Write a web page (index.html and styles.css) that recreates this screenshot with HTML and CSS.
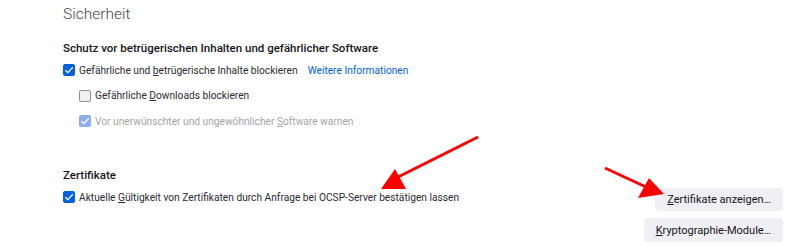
FILE: index.html
```html
<!DOCTYPE html>
<html lang="de">
<head>
    <meta charset="UTF-8">
    <title>Einstellungen - Sicherheit</title>
    <link rel="stylesheet" href="styles.css">
</head>
<body>
    <div class="pane">
        <h1>Sicherheit</h1>

        <!-- Schutz vor betrügerischen Inhalten -->
        <h2>Schutz vor betrügerischen Inhalten und gefährlicher Software</h2>
        <div class="row">
            <span class="check checked"></span>
            <span>Gefährliche und <u>b</u>etrügerische Inhalte blockieren</span>
            <a class="more" href="#">Weitere Informationen</a>
        </div>
        <div class="row sub">
            <span class="check"></span>
            <span>Gefährliche <u>D</u>ownloads blockieren</span>
        </div>
        <div class="row sub disabled">
            <span class="check checked"></span>
            <span>Vor unerwünschter und ungewöhnlicher <u>S</u>oftware warnen</span>
        </div>

        <!-- Zertifikate -->
        <h2 class="certs-title">Zertifikate</h2>
        <div class="certs">
            <div class="row">
                <span class="check checked"></span>
                <span>Aktuelle <u>G</u>ültigkeit von Zertifikaten durch Anfrage bei OCSP-Server bestätigen lassen</span>
            </div>
            <div class="buttons">
                <button><u>Z</u>ertifikate anzeigen…</button>
                <button><u>K</u>ryptographie-Module…</button>
            </div>
        </div>
    </div>

    <!-- rote Pfeile über dem Inhalt -->
    <svg class="arrows" width="800" height="246" viewBox="0 0 800 246">
        <line x1="478" y1="137" x2="396" y2="178" stroke="#f00" stroke-width="3"/>
        <polygon points="395,169 381,189 406,189" fill="#f00"/>
        <line x1="605" y1="168" x2="646" y2="187" stroke="#f00" stroke-width="3"/>
        <polygon points="649,178 638,198 664,194" fill="#f00"/>
    </svg>
</body>
</html>
```

FILE: styles.css
```css
body {
    margin: 0;
    font-family: Roboto, "Liberation Sans", sans-serif;
    font-size: 10.2px;
    color: #2b2a33;
    background-color: #fff;
    position: relative;
}

.pane {
    padding: 3px 17px 0 63px;
}

h1 {
    margin: 0 0 15px 0;
    font-size: 15.5px;
    font-weight: 300;
    line-height: 22px;
    color: #45444c;
}

h2 {
    margin: 0 0 4px 0;
    font-size: 11.5px;
    font-weight: 500;
    line-height: 16px;
    color: #15141a;
}

.certs-title {
    margin-top: 36px;
}

.row {
    display: flex;
    align-items: center;
    height: 20px;
    margin-bottom: 5.5px;
    white-space: nowrap;
}

.row.sub {
    padding-left: 16px;
}

.row.disabled {
    color: #a3a3a8;
}

.check {
    width: 12px;
    height: 12px;
    box-sizing: border-box;
    margin-right: 4px;
    border: 1px solid #8f8f9d;
    border-radius: 2px;
    background-color: #f0f0f4;
    flex-shrink: 0;
}

.check.checked {
    border-color: #0061e0;
    background-color: #0061e0;
    background-image: url("data:image/svg+xml,%3Csvg xmlns='http://www.w3.org/2000/svg' viewBox='0 0 12 12'%3E%3Cpath d='M2.3 6.2 L4.8 8.6 L9.8 3.2' fill='none' stroke='white' stroke-width='1.3'/%3E%3C/svg%3E");
    background-size: 12px 12px;
    background-position: -1px -1px;
}

.disabled .check.checked {
    border-color: #8ab0ee;
    background-color: #8ab0ee;
}

.more {
    margin-left: 10px;
    color: #0061e0;
    text-decoration: none;
}

.certs {
    display: flex;
    justify-content: space-between;
    align-items: flex-start;
}

.buttons {
    display: flex;
    flex-direction: column;
    align-items: flex-end;
    gap: 7px;
    margin-top: 1px;
}

button {
    font-family: Roboto, "Liberation Sans", sans-serif;
    font-size: 11px;
    color: #15141a;
    background-color: #f0f0f4;
    border: none;
    border-radius: 4px;
    height: 23px;
    padding: 0 12px;
}

button + button {
    height: 24px;
}

.arrows {
    position: absolute;
    top: 0;
    left: 0;
}
```
